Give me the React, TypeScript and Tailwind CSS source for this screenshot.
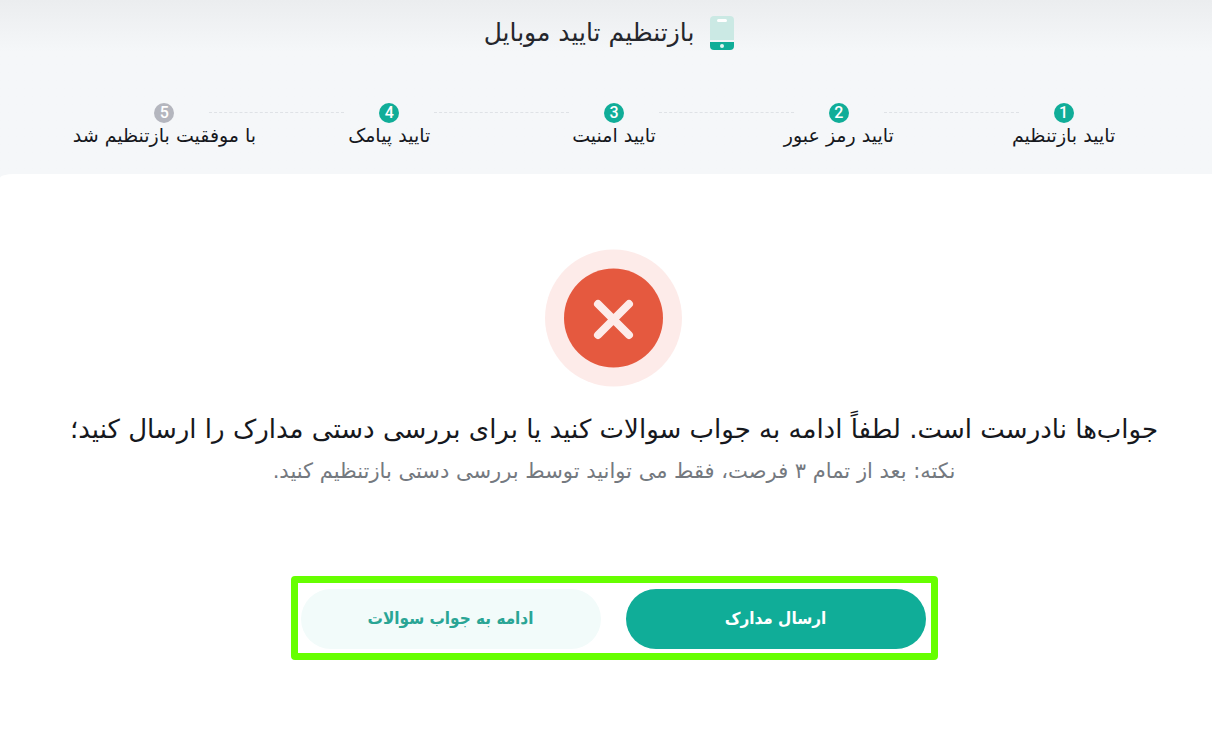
const steps = [
  { label: "تایید بازتنظیم", done: true },
  { label: "تایید رمز عبور", done: true },
  { label: "تایید امنیت", done: true },
  { label: "تایید پیامک", done: true },
  { label: "با موفقیت بازتنظیم شد", done: false },
];

const PhoneIcon = () => (
  <svg width="24" height="34" viewBox="0 0 24 34" aria-hidden="true">
    <path d="M4 0h16a4 4 0 0 1 4 4v20H0V4a4 4 0 0 1 4-4z" fill="#cbe9e4" />
    <path d="M0 26h24v4a4 4 0 0 1-4 4H4a4 4 0 0 1-4-4z" fill="#10ad98" />
    <rect x="7" y="3" width="10" height="3" rx="1.5" fill="#fff" />
    <circle cx="12" cy="30" r="2" fill="#e3f6f3" />
  </svg>
);

const ErrorIcon = () => (
  <svg width="138" height="138" viewBox="0 0 138 138" aria-hidden="true">
    <circle cx="68.5" cy="69" r="68.5" fill="#fdebe9" />
    <circle cx="68.5" cy="69" r="49.5" fill="#e5593f" />
    <path
      d="M53 55l31 31M84 55L53 86"
      stroke="#fdebe9"
      strokeWidth="8"
      strokeLinecap="round"
    />
  </svg>
);

const Steps = () => (
  <ol className="grid grid-cols-5 px-9">
    {steps.map(({ label, done }, i) => (
      <li key={label} className="relative flex flex-col items-center">
        <span
          className={`flex h-5 w-5 items-center justify-center rounded-full font-[Roboto] text-base font-medium leading-5 text-white ${
            done ? "bg-[#10ad98]" : "bg-[#b4b6be]"
          }`}
        >
          {i + 1}
        </span>
        <span className="whitespace-nowrap text-[19px] leading-6 text-[#16181d]">
          {label}
        </span>
        {i < steps.length - 1 && (
          <span className="absolute right-[70%] top-[9px] w-3/5 border-t border-dashed border-[#dfe2e6]" />
        )}
      </li>
    ))}
  </ol>
);

const App = () => (
  <div
    dir="rtl"
    className="min-h-screen overflow-hidden bg-[#f5f7f9] font-['DejaVu_Sans',sans-serif]"
  >
    <header className="h-[174px] bg-linear-to-b from-[#ebedef] to-[#f5f7f9] to-30% pl-4">
      <div className="flex items-center justify-center gap-4 pt-4 pr-2.5">
        <PhoneIcon />
        <h1 className="text-[25px] leading-8 text-[#25272d]">
          بازتنظیم تایید موبایل
        </h1>
      </div>
      <div className="pt-[53px]">
        <Steps />
      </div>
    </header>
    <main className="flex min-h-[568px] flex-col items-center rounded-tl-[14px_4px] bg-white pt-[75px] pl-4">
      <ErrorIcon />
      <h2 className="mt-5 text-center text-[26px] leading-11 text-[#16181d]">
        جواب‌ها نادرست است. لطفاً ادامه به جواب سوالات کنید یا برای بررسی دستی
        مدارک را ارسال کنید؛
      </h2>
      <p className="text-center text-[21px] leading-10 text-[#74797f]">
        نکته: بعد از تمام ۳ فرصت، فقط می توانید توسط بررسی دستی بازتنظیم کنید.
      </p>
      <div className="mt-[85px] flex gap-[25px] rounded-sm border-7 border-[#66ff00] pt-1.5 pr-[5px] pb-1 pl-[3px] font-['DejaVu_Sans_Condensed','DejaVu_Sans',sans-serif] text-[17px] font-bold">
        <button className="h-15 w-[300px] rounded-full bg-[#10ad98] text-white">
          ارسال مدارک
        </button>
        <button className="h-15 w-[300px] rounded-full bg-[#f2fbfa] text-[#2aa595]">
          ادامه به جواب سوالات
        </button>
      </div>
    </main>
  </div>
);

export default App;
